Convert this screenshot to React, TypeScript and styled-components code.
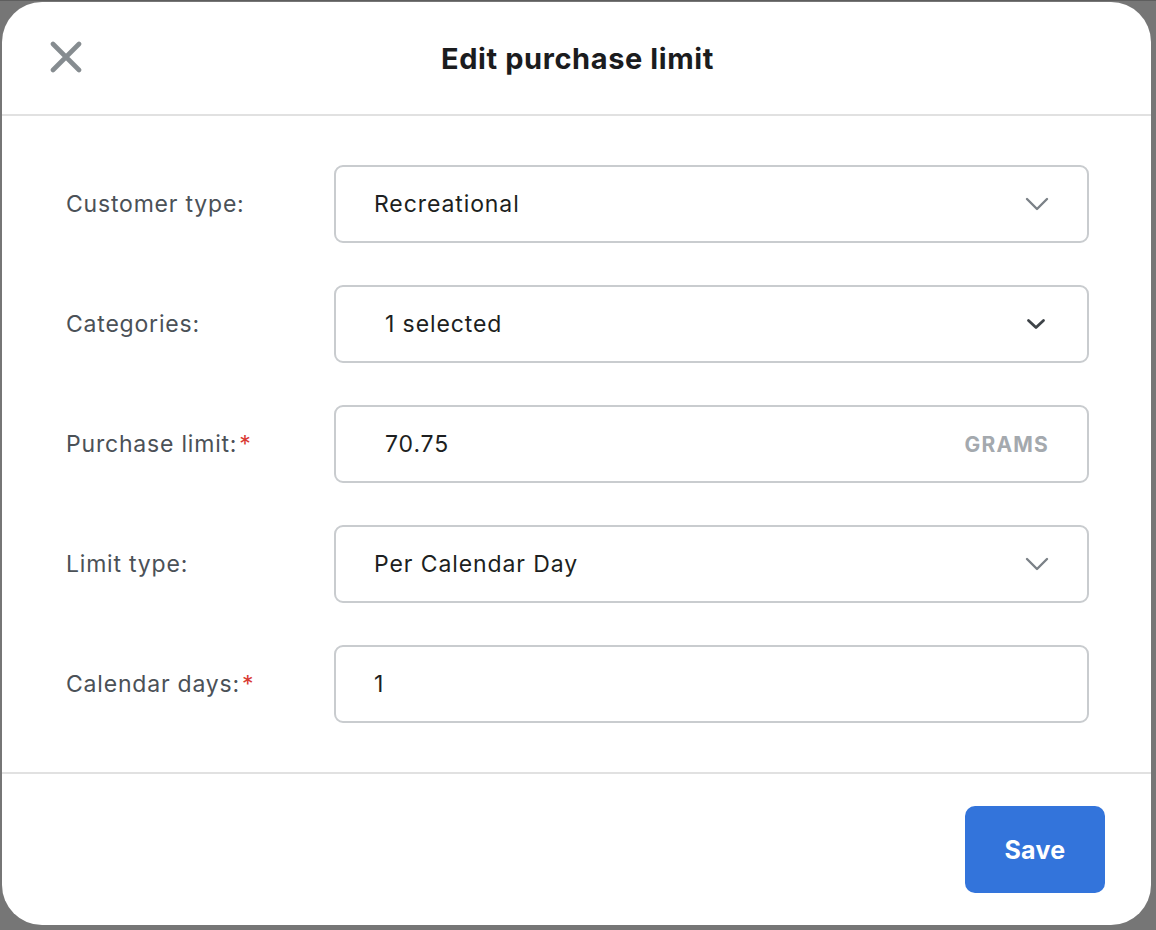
import React from "react";
import styled, { createGlobalStyle } from "styled-components";

const GlobalStyle = createGlobalStyle`
    html, body {
        margin: 0;
        padding: 0;
        background: #767676;
        font-family: Inter, "Noto Sans", "Liberation Sans", sans-serif;
    }
`;

type Field = {
    label: string;
    required?: boolean;
    value: string;
    inset?: boolean;
    kind: "select" | "multi" | "unit" | "text";
};

const fields: Field[] = [
    { label: "Customer type:", value: "Recreational", kind: "select" },
    { label: "Categories:", value: "1 selected", kind: "multi", inset: true },
    { label: "Purchase limit:", required: true, value: "70.75", kind: "unit", inset: true },
    { label: "Limit type:", value: "Per Calendar Day", kind: "select" },
    { label: "Calendar days:", required: true, value: "1", kind: "text" },
];

const CloseIcon = () => (
    <svg width="32" height="32" viewBox="0 0 32 32" fill="none">
        <path d="M3 3 L29 29 M29 3 L3 29" stroke="#868c90" strokeWidth="4.6" strokeLinecap="round" />
    </svg>
);

const Chevron = ({ bold }: { bold?: boolean }) =>
    bold ? (
        <svg width="20" height="12" viewBox="0 0 20 12" fill="none">
            <path d="M2.5 2.5 L10 9.5 L17.5 2.5" stroke="#3e4348" strokeWidth="2.8" strokeLinecap="round" strokeLinejoin="round" />
        </svg>
    ) : (
        <svg width="24" height="14" viewBox="0 0 24 14" fill="none">
            <path d="M2 2 L12 12 L22 2" stroke="#7b8187" strokeWidth="2.4" strokeLinecap="round" strokeLinejoin="round" />
        </svg>
    );

const App: React.FC = () => {
    return (
        <>
            <GlobalStyle />
            <Backdrop>
                <Modal>
                    <Header>
                        <CloseButton type="button" aria-label="Close">
                            <CloseIcon />
                        </CloseButton>
                        <Title>Edit purchase limit</Title>
                    </Header>
                    <Body>
                        {fields.map((f) => (
                            <Row key={f.label}>
                                <Label>
                                    {f.label}
                                    {f.required && <Star>*</Star>}
                                </Label>
                                <InputBox $inset={f.inset}>
                                    <Value>{f.value}</Value>
                                    {f.kind === "select" && (
                                        <IconSlot>
                                            <Chevron />
                                        </IconSlot>
                                    )}
                                    {f.kind === "multi" && (
                                        <IconSlot $shift>
                                            <Chevron bold />
                                        </IconSlot>
                                    )}
                                    {f.kind === "unit" && <Unit>GRAMS</Unit>}
                                </InputBox>
                            </Row>
                        ))}
                    </Body>
                    <Footer>
                        <SaveButton type="button">Save</SaveButton>
                    </Footer>
                </Modal>
            </Backdrop>
        </>
    );
};

const Backdrop = styled.div`
    width: 1156px;
    height: 930px;
    box-sizing: border-box;
    padding: 2px 5px 5px 2px;
    border-top: 1px solid #5e5e5e;
`;

const Modal = styled.div`
    width: 1149px;
    height: 923px;
    margin-top: -1px;
    background: #ffffff;
    border-radius: 40px;
    display: flex;
    flex-direction: column;
    overflow: hidden;
`;

const Header = styled.div`
    position: relative;
    height: 112px;
    flex-shrink: 0;
    display: flex;
    align-items: center;
    justify-content: center;
    border-bottom: 2px solid #e1e1e1;
`;

const CloseButton = styled.button`
    position: absolute;
    left: 48px;
    top: 39px;
    padding: 0;
    border: none;
    background: none;
    display: flex;
    cursor: pointer;
`;

const Title = styled.h2`
    margin: 0;
    font-size: 29px;
    font-weight: 700;
    color: #1b1c1e;
    letter-spacing: 0.6px;
    transform: translateX(1px);
`;

const Body = styled.div`
    flex: 1;
    display: flex;
    flex-direction: column;
    gap: 42px;
    padding: 49px 63px 0 64px;
    border-bottom: 2px solid #e1e1e1;
`;

const Row = styled.div`
    display: flex;
    align-items: center;
`;

const Label = styled.div`
    width: 269px;
    flex-shrink: 0;
    font-size: 23px;
    letter-spacing: 0.8px;
    color: #4b5157;
`;

const Star = styled.span`
    color: #d93a32;
    margin-left: 2px;
`;

const InputBox = styled.div<{ $inset?: boolean }>`
    flex: 1;
    height: 78px;
    box-sizing: border-box;
    border: 2px solid #c9cccf;
    border-radius: 9px;
    display: flex;
    align-items: center;
    padding: 0 38px 0 ${(p) => (p.$inset ? "49px" : "38px")};
    margin-right: -1px;
    margin-left: -1px;
`;

const Value = styled.div`
    flex: 1;
    font-size: 23px;
    letter-spacing: 0.9px;
    color: #1d1f21;
`;

const IconSlot = styled.div<{ $shift?: boolean }>`
    display: flex;
    align-items: center;
    margin-right: ${(p) => (p.$shift ? "3px" : "0")};
`;

const Unit = styled.div`
    font-size: 21px;
    font-weight: 700;
    color: #a4a9ae;
    letter-spacing: 1.2px;
`;

const Footer = styled.div`
    height: 151px;
    flex-shrink: 0;
    display: flex;
    justify-content: flex-end;
    align-items: flex-start;
    padding: 32px 46px 0 0;
    box-sizing: border-box;
`;

const SaveButton = styled.button`
    width: 140px;
    height: 87px;
    border: none;
    border-radius: 10px;
    background: #3374db;
    color: #ffffff;
    font-family: Inter, "Noto Sans", "Liberation Sans", sans-serif;
    font-size: 25px;
    font-weight: 700;
    letter-spacing: 0.3px;
    cursor: pointer;
`;

export default App;
